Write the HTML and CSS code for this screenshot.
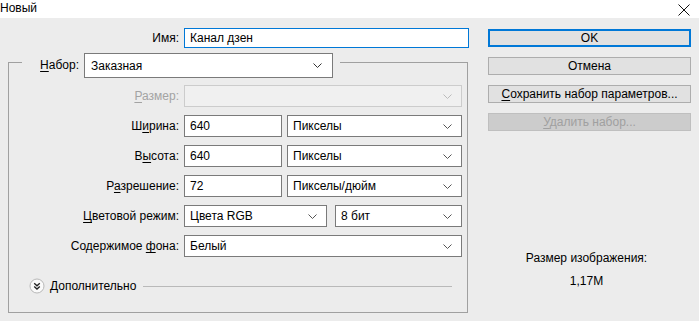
FILE: index.html
```html
<!DOCTYPE html>
<html lang="ru">
<head>
    <meta charset="UTF-8">
    <title>Новый</title>
    <link rel="stylesheet" href="styles.css">
</head>
<body>
    <div class="title-bar">
        <span class="title">Новый</span>
        <svg class="close" width="14" height="14" viewBox="0 0 14 14"><path d="M1.5 1.5 L12.5 12.5 M12.5 1.5 L1.5 12.5" stroke="#111" stroke-width="1" fill="none"/></svg>
    </div>
    <div class="dialog">
        <div class="main">
            <div class="row name-row">
                <span class="lbl">Имя:</span>
                <div class="field name-field">Канал дзен</div>
            </div>
            <fieldset class="group">
                <legend class="preset">
                    <span class="lbl preset-lbl"><u>Н</u>абор:</span>
                    <div class="select preset-select">Заказная
                        <svg class="chev" width="9" height="6" viewBox="0 0 9 6"><path d="M0.5 0.5 L4.5 4.5 L8.5 0.5" stroke="#333" fill="none"/></svg>
                    </div>
                </legend>
                <div class="row">
                    <span class="lbl disabled"><u>Р</u>азмер:</span>
                    <div class="select full off">
                        <svg class="chev" width="9" height="6" viewBox="0 0 9 6"><path d="M0.5 0.5 L4.5 4.5 L8.5 0.5" stroke="#bbb" fill="none"/></svg>
                    </div>
                </div>
                <div class="row">
                    <span class="lbl">Ш<u>и</u>рина:</span>
                    <div class="field num">640</div>
                    <div class="select unit">Пикселы
                        <svg class="chev" width="9" height="6" viewBox="0 0 9 6"><path d="M0.5 0.5 L4.5 4.5 L8.5 0.5" stroke="#555" fill="none"/></svg>
                    </div>
                </div>
                <div class="row">
                    <span class="lbl">В<u>ы</u>сота:</span>
                    <div class="field num">640</div>
                    <div class="select unit">Пикселы
                        <svg class="chev" width="9" height="6" viewBox="0 0 9 6"><path d="M0.5 0.5 L4.5 4.5 L8.5 0.5" stroke="#555" fill="none"/></svg>
                    </div>
                </div>
                <div class="row">
                    <span class="lbl">Р<u>а</u>зрешение:</span>
                    <div class="field num">72</div>
                    <div class="select unit">Пикселы/дюйм
                        <svg class="chev" width="9" height="6" viewBox="0 0 9 6"><path d="M0.5 0.5 L4.5 4.5 L8.5 0.5" stroke="#555" fill="none"/></svg>
                    </div>
                </div>
                <div class="row">
                    <span class="lbl"><u>Ц</u>ветовой режим:</span>
                    <div class="select mode">Цвета RGB
                        <svg class="chev" width="9" height="6" viewBox="0 0 9 6"><path d="M0.5 0.5 L4.5 4.5 L8.5 0.5" stroke="#555" fill="none"/></svg>
                    </div>
                    <div class="select bits">8 бит
                        <svg class="chev" width="9" height="6" viewBox="0 0 9 6"><path d="M0.5 0.5 L4.5 4.5 L8.5 0.5" stroke="#555" fill="none"/></svg>
                    </div>
                </div>
                <div class="row">
                    <span class="lbl">Содержимое <u>ф</u>она:</span>
                    <div class="select full">Белый
                        <svg class="chev" width="9" height="6" viewBox="0 0 9 6"><path d="M0.5 0.5 L4.5 4.5 L8.5 0.5" stroke="#555" fill="none"/></svg>
                    </div>
                </div>
                <div class="advanced">
                    <svg class="expand" width="16" height="16" viewBox="0 0 16 16">
                        <circle cx="8" cy="8" r="7" fill="#fafafa" stroke="#b8b8b8"/>
                        <path d="M5.2 5.2 L8 7.8 L10.8 5.2 M5.2 8.4 L8 11 L10.8 8.4" stroke="#222" stroke-width="1.3" fill="none"/>
                    </svg>
                    <span>Дополнительно</span>
                    <div class="sep"></div>
                </div>
            </fieldset>
        </div>
        <div class="side">
            <button class="btn ok">OK</button>
            <button class="btn">Отмена</button>
            <button class="btn"><u>С</u>охранить набор параметров...</button>
            <button class="btn off"><u>У</u>далить набор...</button>
            <div class="info">
                <div>Размер изображения:</div>
                <div>1,17M</div>
            </div>
        </div>
    </div>
</body>
</html>
```

FILE: styles.css
```css
body {
    margin: 0;
    padding: 0;
    background-color: #ececec;
    color: #000;
    font-family: "Liberation Sans", Arial, sans-serif;
    font-size: 12px;
    width: 699px;
    height: 321px;
    overflow: hidden;
}
u {
    text-decoration-thickness: 1px;
    text-underline-offset: 2px;
}
.title-bar {
    height: 18px;
    background-color: #fff;
    display: flex;
    align-items: center;
    justify-content: space-between;
    padding: 0 8px 0 0;
}
.title {
    font-size: 12px;
    margin-top: -2px;
}
.close {
    margin-top: 1px;
}
.dialog {
    display: flex;
    height: 303px;
}
.main {
    width: 461px;
    padding-left: 8px;
}
.row {
    display: flex;
    align-items: center;
    height: 22px;
    margin-bottom: 8px;
}
.lbl {
    width: 170px;
    text-align: right;
    margin-right: 5px;
    white-space: nowrap;
}
.lbl.disabled {
    color: #a3a3a3;
}
.name-row {
    margin-top: 10px;
    height: 20px;
    margin-bottom: 0;
}
.name-row .lbl {
    width: 171px;
}
.field, .select {
    box-sizing: border-box;
    height: 22px;
    border: 1px solid #7a7a7a;
    background-color: #fff;
    padding: 0 5px;
    display: flex;
    align-items: center;
    white-space: nowrap;
}
.name-field {
    width: 285px;
    height: 20px;
    border-color: #0078d7;
}
.select {
    justify-content: space-between;
    padding-right: 9px;
}
.chev {
    margin-left: auto;
    margin-top: 1px;
}
.group {
    box-sizing: border-box;
    width: 460px;
    height: 260px;
    margin: 5px 0 0 0;
    padding: 14px 0 0 0;
    border: 1px solid #a0a0a0;
}
.preset {
    display: flex;
    align-items: flex-start;
    height: 18px;
    margin-left: 13px;
    padding: 0 7px 0 0;
}
.preset-lbl {
    width: 57px;
    margin-top: 5px;
}
.preset-select {
    width: 249px;
    height: 25px;
    padding-left: 6px;
    padding-right: 10px;
}
.full {
    width: 278px;
}
.off {
    background-color: #f0f0f0;
    border-color: #cccccc;
}
.num {
    width: 98px;
    margin-right: 5px;
}
.unit {
    width: 175px;
}
.mode {
    width: 143px;
    margin-right: 8px;
}
.bits {
    width: 127px;
}
.advanced {
    display: flex;
    align-items: center;
    margin-top: 21px;
    padding-left: 20px;
    padding-right: 15px;
}
.expand {
    margin-right: 5px;
}
.sep {
    flex: 1;
    height: 1px;
    background-color: #b9b9b9;
    margin-left: 7px;
}
.side {
    width: 203px;
    margin-left: 19px;
    padding-top: 11px;
    display: flex;
    flex-direction: column;
}
.btn {
    box-sizing: border-box;
    height: 18px;
    margin-bottom: 10px;
    padding: 0;
    font-family: inherit;
    font-size: 12px;
    color: #000;
    background-color: #e1e1e1;
    border: 1px solid #adadad;
}
.btn.ok {
    border: 2px solid #0078d7;
}
.btn.off {
    background-color: #cccccc;
    border-color: #bfbfbf;
    color: #a0a0a0;
}
.info {
    margin-top: 106px;
    padding-right: 6px;
    text-align: center;
    line-height: 23px;
}
```
